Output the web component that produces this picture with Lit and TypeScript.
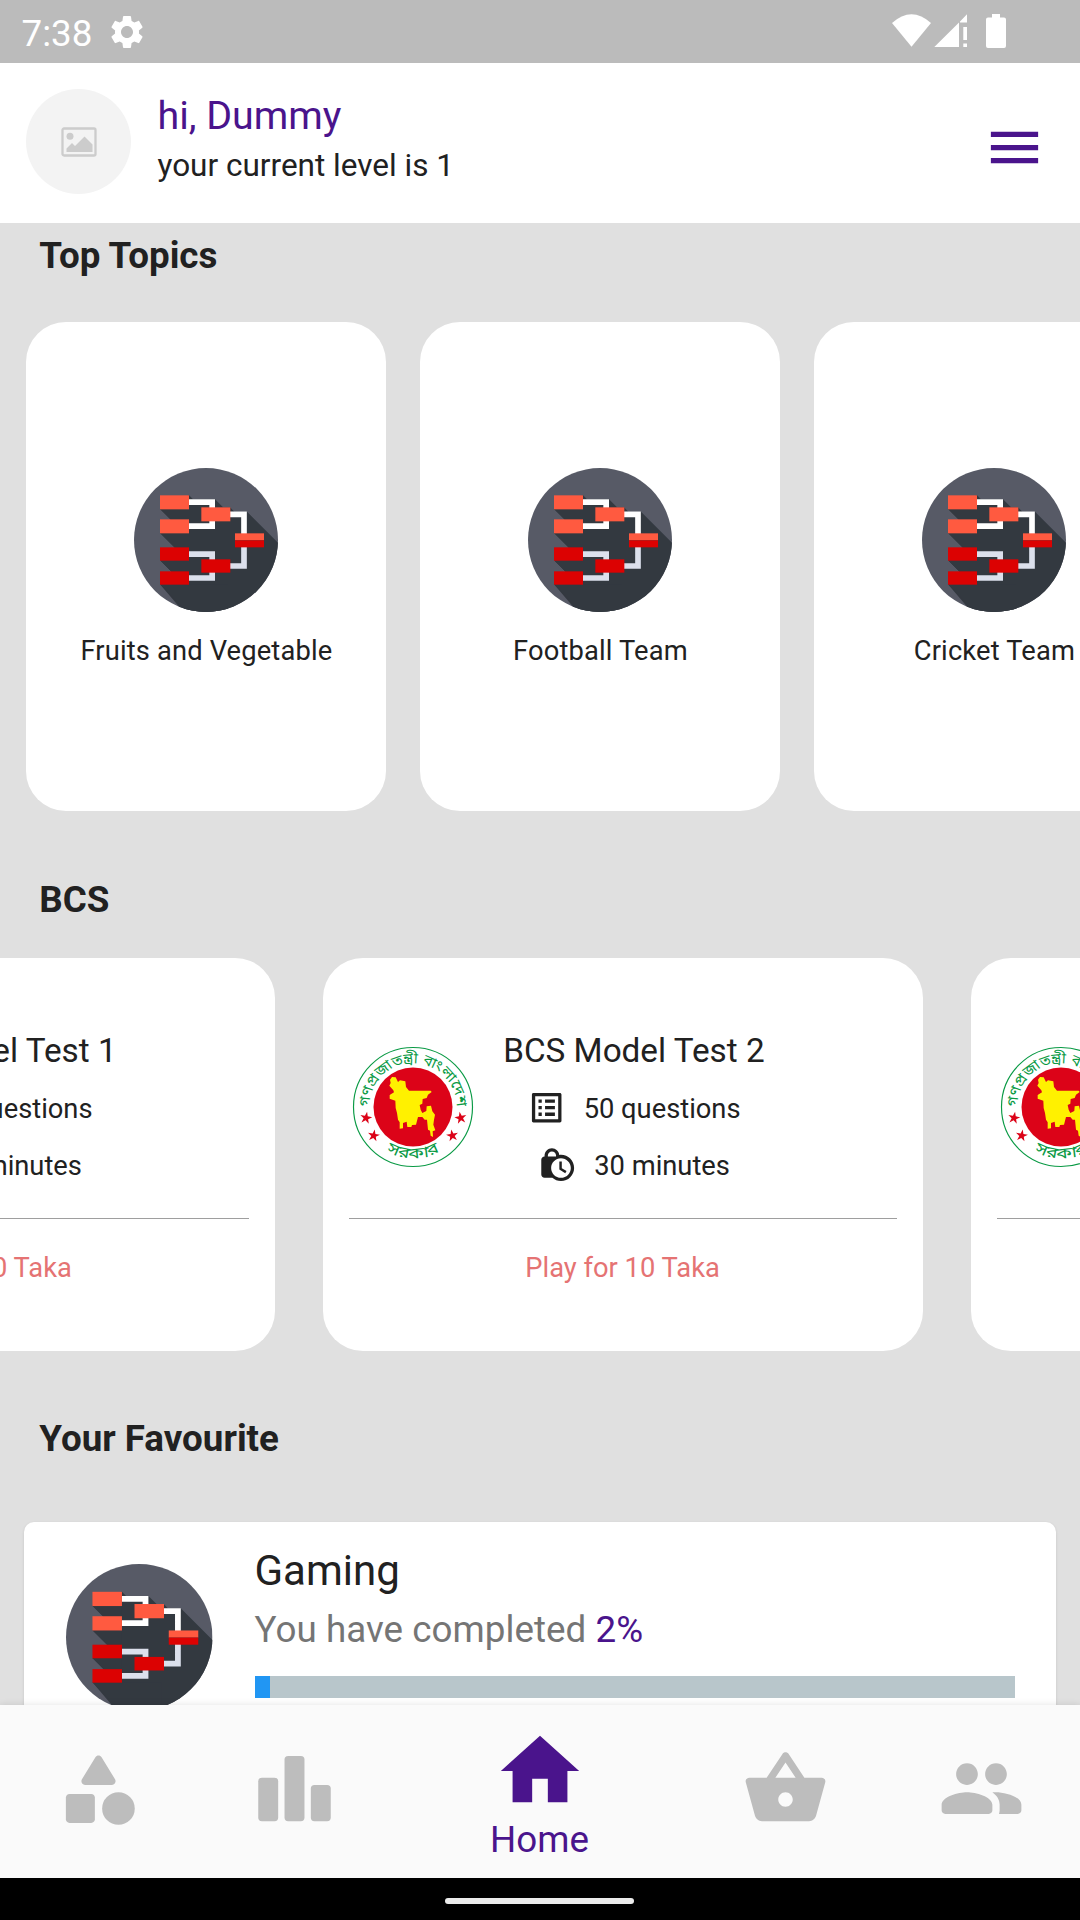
import { LitElement, html, svg, css } from "lit";
import { customElement, property } from "lit/decorators.js";

const starPoints = (cx: number, cy: number, r: number, tilt: number) =>
  Array.from({ length: 10 }, (_, i) => {
    const a = ((i * 36 - 90 + tilt) * Math.PI) / 180;
    const d = i % 2 ? r * 0.38 : r;
    return `${(cx + d * Math.cos(a)).toFixed(1)},${(cy + d * Math.sin(a)).toFixed(1)}`;
  }).join(" ");

@customElement("topic-icon")
export class TopicIcon extends LitElement {
  static styles = css`
    :host { display: block; }
    svg { display: block; width: 100%; height: 100%; }
  `;
  render() {
    return html`<svg viewBox="42 53 432 432">
      <defs><clipPath id="disc"><circle cx="258" cy="269" r="216" /></clipPath></defs>
      <g clip-path="url(#disc)">
        <rect x="42" y="53" width="432" height="432" fill="#575a66" />
        <path fill="#333940" d="M207 135l12 12h66l24 24h21l13 13h38l120 120v220H224L120 402h33v-39L120 330h43v-39L120 248h31v-41L120 176z" />
        <path fill="#333940" d="M120 176l31 31h56v-72zM120 248l43 43h44v-43zM120 330l33 33h54v-33zM120 402l104 104h100V402z" />
      </g>
      <g fill="none" stroke-width="17">
        <path stroke="#fff" d="M207 155.500h69.500v72h-69.500M330 192h42v60" />
        <path stroke="#dce0ec" d="M207 311.500h69.500v71.500h-69.500M330 347h42v-60" />
      </g>
      <g fill="#ff5a40">
        <rect x="120" y="135" width="87" height="42" /><rect x="120" y="207" width="87" height="42" />
        <rect x="244" y="171" width="87" height="42" /><rect x="345" y="249" width="87" height="21" />
      </g>
      <g fill="#dc0202">
        <rect x="120" y="291" width="87" height="40" /><rect x="120" y="363" width="87" height="40" />
        <rect x="244" y="327" width="87" height="40" /><rect x="345" y="270" width="87" height="21" />
      </g>
    </svg>`;
  }
}

@customElement("state-emblem")
export class StateEmblem extends LitElement {
  static styles = css`
    :host { display: block; }
    svg { display: block; width: 100%; height: 100%; overflow: visible; }
    text { font-family: "Noto Sans Bengali", "Lohit Bengali", "FreeSans", "Noto Sans", sans-serif; fill: #0a9a45; }
    .upper { font-size: 44px; }
    .lower { font-size: 46px; }
  `;
  render() {
    return html`<svg viewBox="37 52 360 360">
      <defs>
        <path id="top" d="M89 260A131 131 0 1 1 345 260" />
        <path id="bottom" d="M101 335A157 157 0 0 0 333 335" />
      </defs>
      <circle cx="217" cy="232" r="178.500" fill="#fff" stroke="#0a9a45" stroke-width="3.500" />
      <circle cx="217" cy="232" r="118.500" fill="#dc0318" />
      <path fill="#fff100" d="M154 142l-6 8 2 10-4 8 12 14 2 6-13 8v11l17 6 1 22 4 15 3 20 5 8v19l10-1v-16l11-4 2 16h12l2-6 12-1 6-23h13l7 8h7l3 30 6 3 2 15 7 4-1-17 8-3-6-17 2-15 3-15-8-10-4-17-13 2-1 14-12 6-5-10-3-14 8-4 1-14 12-3 4-10 11-8-3-4h-65l-9-11-2-17-16-3-6 5-7-14z" />
      ${[[76, 265, 10], [99, 318, 10], [360, 265, -10], [335, 318, -10]].map(
        ([x, y, t]) => svg`<polygon fill="#dc0318" points=${starPoints(x, y, 19, t)} />`
      )}
      <text class="upper" text-anchor="middle"><textPath href="#top" startOffset="50%" textLength="410" lengthAdjust="spacingAndGlyphs">গণপ্রজাতন্ত্রী বাংলাদেশ</textPath></text>
      <text class="lower" text-anchor="middle"><textPath href="#bottom" startOffset="50%" textLength="168" lengthAdjust="spacingAndGlyphs">সরকার</textPath></text>
    </svg>`;
  }
}

@customElement("topic-card")
export class TopicCard extends LitElement {
  @property() label = "";
  static styles = css`
    :host { display: flex; flex-direction: column; align-items: center; flex: none; box-sizing: border-box;
      width: 360px; height: 489px; padding-top: 145.500px; border-radius: 40px; background: #fff; }
    .icon { width: 144px; height: 144px; }
    .label { margin-top: 24px; font-size: 27.300px; line-height: 31px; letter-spacing: 0.15px; white-space: nowrap; }
  `;
  render() {
    return html`<topic-icon class="icon"></topic-icon><div class="label">${this.label}</div>`;
  }
}

@customElement("test-card")
export class TestCard extends LitElement {
  @property() heading = "";
  static styles = css`
    :host { display: block; flex: none; box-sizing: border-box; width: 600px; height: 392.500px;
      padding: 0 26px; border-radius: 40px; background: #fff; }
    .info { display: flex; box-sizing: border-box; height: 261px; padding: 73px 0 0 4.300px; border-bottom: 1.300px solid #9e9e9e; }
    .emblem { width: 120px; height: 120px; margin-top: 16px; }
    .facts { display: flex; flex-direction: column; align-items: center; width: 322px; }
    .heading { font-size: 33.270px; line-height: 40px; white-space: nowrap; }
    .fact { display: flex; align-items: center; gap: 17px; font-size: 27.300px; line-height: 32px; white-space: nowrap; }
    .fact span { padding-top: 2px; }
    .questions { margin-top: 17px; }
    .minutes { margin-top: 18px; }
    .glyph { width: 39.400px; height: 39.400px; fill: #212121; }
    .play { margin-top: 33px; text-align: center; font-size: 27.300px; line-height: 32px; color: #e57373; }
  `;
  render() {
    return html`
      <div class="info">
        <state-emblem class="emblem"></state-emblem>
        <div class="facts">
          <div class="heading">${this.heading}</div>
          <div class="fact questions">
            <svg class="glyph" viewBox="0 0 24 24"><path d="M19 5v14H5V5h14m1.100-2H3.900c-.5 0-.9.4-.9.9v16.200c0 .4.4.9.9.9h16.200c.4 0 .9-.5.9-.9V3.900c0-.5-.5-.9-.9-.9zM11 7h6v2h-6V7zm0 4h6v2h-6v-2zm0 4h6v2h-6zM7 7h2v2H7zm0 4h2v2H7zm0 4h2v2H7z" /></svg>
            <span>50 questions</span>
          </div>
          <div class="fact minutes">
            <svg class="glyph" viewBox="0 0 24 24"><path d="M14.500 14.200l2.900 1.700-.8 1.300L13 15v-5h1.500v4.200zM22 14c0 4.410-3.590 8-8 8-2.020 0-3.860-.76-5.270-2H4c-1.150 0-2-.85-2-2V9c0-1.120.89-1.960 2-2v-.5C4 4.010 6.010 2 8.500 2c2.340 0 4.240 1.790 4.460 4.080.34-.05.69-.08 1.040-.08 4.410 0 8 3.590 8 8zM6 7h5v-.74C10.880 4.990 9.800 4 8.500 4 7.120 4 6 5.120 6 6.500V7zm14 7c0-3.310-2.690-6-6-6s-6 2.690-6 6 2.690 6 6 6 6-2.690 6-6z" /></svg>
            <span>30 minutes</span>
          </div>
        </div>
      </div>
      <div class="play">Play for 10 Taka</div>
    `;
  }
}

@customElement("favourite-card")
export class FavouriteCard extends LitElement {
  @property() name = "";
  @property({ type: Number }) percent = 0;
  static styles = css`
    :host { display: flex; box-sizing: border-box; width: 1032px; height: 232px; margin: 0 24px; padding: 41.500px 42px 0;
      border-radius: 10px; background: #fff; box-shadow: 0 1px 3px rgba(0, 0, 0, 0.12); }
    .icon { flex: none; width: 146.500px; height: 146.500px; }
    .details { margin: -18px 0 0 42px; flex: 1; }
    .name { font-size: 42px; line-height: 50px; }
    .status { margin-top: 12px; font-size: 36.750px; line-height: 44px; letter-spacing: 0.04px; color: #757575; }
    .value { color: #4a148c; }
    .bar { height: 21.500px; margin-top: 24.500px; width: 760px; background: #b8c6cb; }
    .fill { height: 100%; background: #2196f3; }
  `;
  render() {
    return html`
      <topic-icon class="icon"></topic-icon>
      <div class="details">
        <div class="name">${this.name}</div>
        <div class="status">You have completed <span class="value">${this.percent}%</span></div>
        <div class="bar"><div class="fill" style="width:${this.percent}%"></div></div>
      </div>
    `;
  }
}

@customElement("app-root")
export class AppRoot extends LitElement {
  static styles = css`
    :host { display: flex; flex-direction: column; width: 1080px; height: 1920px; overflow: hidden;
      background: #e0e0e0; color: #212121; font-family: Roboto, sans-serif; }
    .statusbar { display: flex; flex: none; box-sizing: border-box; height: 63px; padding: 0 74px 0 21.500px; background: #bbb; color: #fff; }
    .clock { width: 85.500px; font-size: 36.750px; line-height: 67px; }
    .gear { width: 40px; height: 40px; margin-top: 11.500px; fill: #fff; }
    .signals { width: 115px; height: 63px; margin-left: auto; fill: #fff; }
    .header { display: flex; flex: none; box-sizing: border-box; height: 160px; padding: 26px 34px 0 26.300px; background: #fff; }
    .avatar { display: flex; align-items: center; justify-content: center; width: 105px; height: 105px; border-radius: 50%; background: #f3f3f3; }
    .placeholder { width: 36px; height: 30px; }
    .greeting { margin-left: 26.200px; }
    .hello { font-size: 39.375px; line-height: 46px; margin-top: 4px; color: #4a148c; }
    .level { font-size: 31.500px; line-height: 38px; margin-top: 8px; }
    .menu { width: 63px; height: 63px; margin: 27px 0 0 auto; fill: #4a148c; }
    .content { flex: 1; min-height: 0; overflow: hidden; }
    .title { margin: 0 0 0 39.300px; font-size: 36.750px; line-height: 44px; font-weight: 700; }
    .topics-title { margin-top: 11px; }
    .bcs-title { margin-top: 67px; }
    .favourite-title { margin-top: 66px; }
    .topics { display: flex; gap: 34px; margin: 44px 0 0 26.400px; }
    .tests { display: flex; gap: 48px; margin: 36px 0 0 -325.400px; }
    .favourite { margin-top: 61.500px; }
    .nav { display: flex; flex: none; height: 173.500px; background: #fafafa; box-shadow: 0 0 7px rgba(0, 0, 0, 0.12); z-index: 1; }
    .tab { display: flex; flex: 1; flex-direction: column; align-items: center; padding-top: 40.500px; fill: #bdbdbd; }
    .tab svg { flex: none; width: 87px; height: 87px; }
    .tab.active { flex: 1.5; padding-top: 19px; fill: #4a148c; color: #4a148c; font-size: 36.750px; line-height: 44px; }
    .tab.active svg { width: 94px; height: 94px; }
    .tab-label { margin-right: 1px; }
    .system { display: flex; flex: none; justify-content: center; height: 42px; background: #000; }
    .handle { width: 189px; height: 6px; margin: 20px 2px 0 0; border-radius: 3px; background: #ebebeb; }
  `;
  render() {
    return html`
      <div class="statusbar">
        <div class="clock">7:38</div>
        <svg class="gear" viewBox="0 0 24 24"><path d="M19.140 12.940c.04-.3.06-.61.06-.94 0-.32-.02-.64-.07-.94l2.030-1.580c.18-.14.23-.41.12-.61l-1.920-3.320c-.12-.22-.37-.29-.59-.22l-2.390.96c-.5-.38-1.030-.7-1.620-.94l-.36-2.540c-.04-.24-.24-.41-.48-.41h-3.840c-.24 0-.43.17-.47.41l-.36 2.540c-.59.24-1.130.57-1.620.94l-2.390-.96c-.22-.08-.47 0-.59.22L2.740 8.870c-.12.21-.08.47.12.61l2.030 1.580c-.05.3-.09.63-.09.94s.02.64.07.94l-2.030 1.580c-.18.14-.23.41-.12.61l1.920 3.320c.12.22.37.29.59.22l2.390-.96c.5.38 1.030.7 1.620.94l.36 2.540c.05.24.24.41.48.41h3.840c.24 0 .44-.17.47-.41l.36-2.540c.59-.24 1.130-.56 1.620-.94l2.390.96c.22.08.47 0 .59-.22l1.920-3.320c.12-.22.07-.47-.12-.61l-2.010-1.580zM12 15.600c-1.980 0-3.600-1.620-3.600-3.600s1.620-3.600 3.600-3.600 3.600 1.620 3.600 3.600-1.620 3.600-3.600 3.600z" /></svg>
        <svg class="signals" viewBox="891 0 115 63">
          <path d="M892 23Q911.500 5.500 931 23L911.500 46.700z" />
          <path d="M934.300 47L959 22.500V47zM960 21.500l7-7.300v8.300h-7zM963.300 27h3.700v13h-3.700zM963.300 43.500h3.700V47h-3.700z" />
          <path d="M992 14h8v3.500h4q2 0 2 2V46q0 2-2 2h-16q-2 0-2-2V19.500q0-2 2-2h4z" />
        </svg>
      </div>
      <div class="header">
        <div class="avatar">
          <svg class="placeholder" viewBox="0 0 36 30">
            <rect x="1.500" y="1.500" width="33" height="27" rx="1.500" fill="none" stroke="#ccc" stroke-width="2.300" />
            <circle cx="9" cy="9.300" r="3.500" fill="#ccc" />
            <path fill="#ccc" d="M5.500 25v-3.500l5.500-5.500 3 3L23.500 9.500l8 8V25z" />
          </svg>
        </div>
        <div class="greeting">
          <div class="hello">hi, Dummy</div>
          <div class="level">your current level is 1</div>
        </div>
        <svg class="menu" viewBox="0 0 24 24"><path d="M3 18h18v-2H3v2zm0-5h18v-2H3v2zm0-7v2h18V6H3z" /></svg>
      </div>
      <div class="content">
        <div class="title topics-title">Top Topics</div>
        <div class="topics">
          ${["Fruits and Vegetable", "Football Team", "Cricket Team"].map((t) => html`<topic-card label=${t}></topic-card>`)}
        </div>
        <div class="title bcs-title">BCS</div>
        <div class="tests">
          ${[1, 2, 3].map((n) => html`<test-card heading="BCS Model Test ${n}"></test-card>`)}
        </div>
        <div class="title favourite-title">Your Favourite</div>
        <favourite-card class="favourite" name="Gaming" percent="2"></favourite-card>
      </div>
      <div class="nav">
        <div class="tab"><svg viewBox="0 0 24 24"><path d="M11.150 3.400L7.430 9.480c-.41.66.07 1.520.85 1.520h7.430c.78 0 1.260-.86.85-1.520L12.850 3.400c-.39-.64-1.310-.64-1.700 0z" /><circle cx="17.500" cy="17.500" r="4.500" /><path d="M4 21.500h6c.55 0 1-.45 1-1v-6c0-.55-.45-1-1-1H4c-.55 0-1 .45-1 1v6c0 .55.45 1 1 1z" /></svg></div>
        <div class="tab"><svg viewBox="0 0 24 24"><rect x="2" y="9" width="5.500" height="12" rx="1" /><rect x="9.250" y="3" width="5.500" height="18" rx="1" /><rect x="16.500" y="11" width="5.500" height="10" rx="1" /></svg></div>
        <div class="tab active"><svg viewBox="0 0 24 24"><path d="M10 20v-6h4v6h5v-8h3L12 3 2 12h3v8z" /></svg><div class="tab-label">Home</div></div>
        <div class="tab"><svg viewBox="0 0 24 24"><path d="M22 9h-4.790l-4.380-6.560c-.19-.28-.51-.42-.83-.42s-.64.14-.83.43L6.790 9H2c-.55 0-1 .45-1 1 0 .09.01.18.04.27l2.540 9.270c.23.84 1 1.460 1.920 1.460h13c.92 0 1.690-.62 1.930-1.460l2.540-9.270L23 10c0-.55-.45-1-1-1zM12 4.800L14.800 9H9.200L12 4.800zM12 17c-1.100 0-2-.9-2-2s.9-2 2-2 2 .9 2 2-.9 2-2 2z" /></svg></div>
        <div class="tab"><svg viewBox="0 0 24 24"><path d="M16 11c1.660 0 2.990-1.340 2.990-3S17.660 5 16 5s-3 1.340-3 3 1.340 3 3 3zm-8 0c1.660 0 2.990-1.340 2.990-3S9.660 5 8 5 5 6.340 5 8s1.340 3 3 3zm0 2c-2.330 0-7 1.170-7 3.500V18c0 .55.45 1 1 1h12c.55 0 1-.45 1-1v-1.500c0-2.330-4.670-3.500-7-3.500zm8 0c-.29 0-.62.02-.97.05.02.01.03.03.04.04 1.140.83 1.930 1.940 1.930 3.410V18c0 .35-.07.69-.18 1H22c.55 0 1-.45 1-1v-1.500c0-2.330-4.670-3.500-7-3.500z" /></svg></div>
      </div>
      <div class="system"><div class="handle"></div></div>
    `;
  }
}
